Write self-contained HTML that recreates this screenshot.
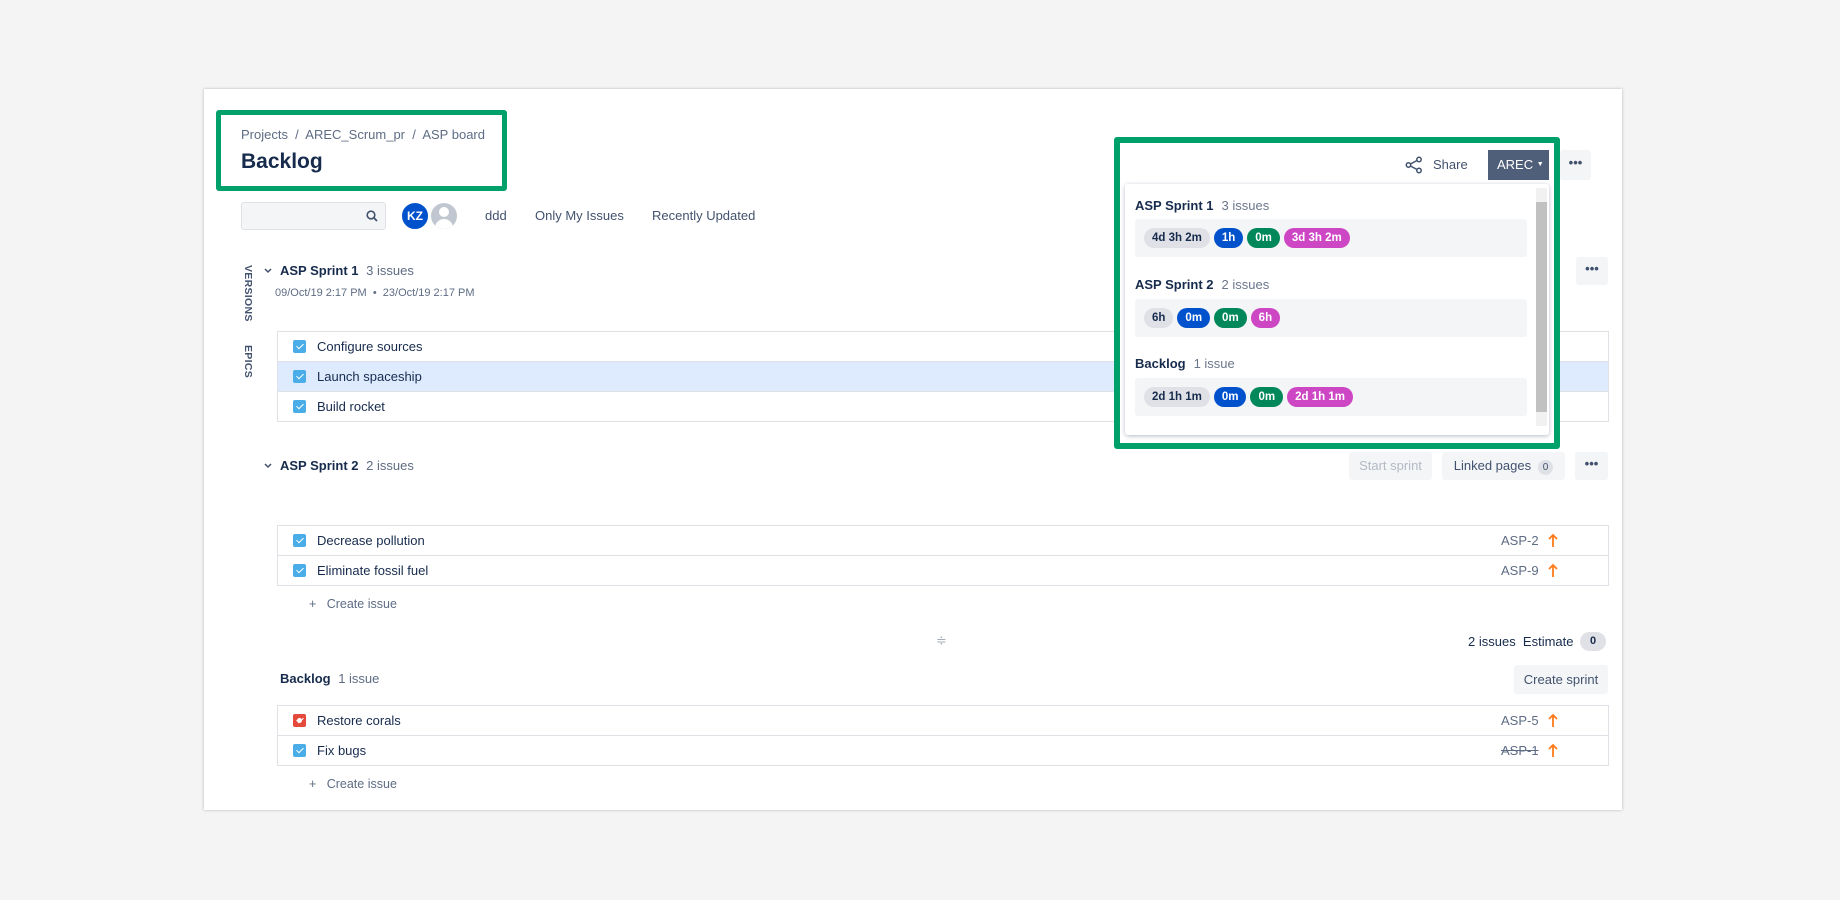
<!DOCTYPE html>
<html><head><meta charset="utf-8"><style>
*{box-sizing:border-box;margin:0;padding:0}
body{width:1840px;height:900px;background:#f4f4f4;font-family:"Liberation Sans",sans-serif;color:#172b4d;position:relative;overflow:hidden;font-size:13px}
.a{position:absolute}
.card{left:204px;top:89px;width:1418px;height:721px;background:#fff;box-shadow:0 0 3px rgba(0,0,0,.25)}
.g{color:#5e6c84}
.row{position:absolute;left:277px;width:1332px;height:31px;border:1px solid #dfe1e6;background:#fff}
.row .t{position:absolute;left:39px;top:7px;font-size:13px}
.cb{position:absolute;left:15px;top:8px;width:13px;height:13px;background:#4bade8;border-radius:2px}
.cb:after{content:"";position:absolute;left:4.5px;top:2px;width:3px;height:6px;border:solid #fff;border-width:0 1.6px 1.6px 0;transform:rotate(45deg)}
.btn{position:absolute;background:#f4f5f7;border-radius:3px;font-size:13px;text-align:center;color:#42526e}
.key{position:absolute;left:1223px;top:7px;color:#5e6c84;font-size:13px}
.arr{position:absolute;left:1269px;top:7px}
.pill{display:inline-block;height:20px;line-height:20px;border-radius:10px;padding:0 8px;font-size:11.5px;font-weight:bold;margin-right:4px;color:#fff}
.box{position:absolute;left:1135px;width:392px;height:38px;background:#f4f5f7;border-radius:3px;padding:9px 0 0 9px}
.lbl{position:absolute;left:1135px;font-size:13px;font-weight:bold}
.lbl span{font-weight:normal;color:#6b778c;margin-left:8px}
</style></head><body>
<div class="a card"></div>

<div class="a" style="left:216px;top:110px;width:291px;height:81px;border:5px solid #00a06a;border-radius:3px"></div>
<div class="a g" style="left:241px;top:127px;font-size:13px">Projects&nbsp; /&nbsp; AREC_Scrum_pr&nbsp; /&nbsp; ASP board</div>
<div class="a" style="left:241px;top:150px;font-size:21px;font-weight:bold">Backlog</div>

<div class="a" style="left:241px;top:202px;width:145px;height:28px;border:1px solid #dfe1e6;background:#f4f5f7;border-radius:3px"></div>
<svg class="a" style="left:366px;top:210px" width="12" height="12" viewBox="0 0 12 12"><circle cx="5" cy="5" r="3.8" fill="none" stroke="#42526e" stroke-width="1.6"/><path d="M8 8l3 3" stroke="#42526e" stroke-width="1.8"/></svg>
<div class="a" style="left:429px;top:201px;width:30px;height:30px;border-radius:50%;background:#c1c7d0;border:2px solid #fff;overflow:hidden"><div class="a" style="left:8px;top:4px;width:10px;height:10px;border-radius:50%;background:#fff"></div><div class="a" style="left:4px;top:16px;width:18px;height:14px;border-radius:9px 9px 0 0;background:#fff"></div></div>
<div class="a" style="left:400px;top:201px;width:30px;height:30px;border-radius:50%;background:#0052cc;color:#fff;font-size:12px;font-weight:bold;text-align:center;line-height:26px;border:2px solid #fff">KZ</div>
<div class="a" style="left:485px;top:208px;color:#42526e">ddd</div>
<div class="a" style="left:535px;top:208px;color:#42526e">Only My Issues</div>
<div class="a" style="left:652px;top:208px;color:#42526e">Recently Updated</div>

<div class="a" style="left:242px;top:265px;font-size:10.5px;font-weight:bold;color:#42526e;writing-mode:vertical-rl;letter-spacing:.3px">VERSIONS</div>
<div class="a" style="left:242px;top:345px;font-size:10.5px;font-weight:bold;color:#42526e;writing-mode:vertical-rl;letter-spacing:.3px">EPICS</div>

<svg class="a" style="left:264px;top:268px" width="8" height="6" viewBox="0 0 8 6"><path d="M1 1l3 3 3-3" fill="none" stroke="#42526e" stroke-width="1.5"/></svg>
<div class="a" style="left:280px;top:263px;font-size:13px;font-weight:bold">ASP Sprint 1 <span class="g" style="font-weight:normal;margin-left:4px">3 issues</span></div>
<div class="a g" style="left:275px;top:287px;font-size:11px">09/Oct/19 2:17 PM &nbsp;•&nbsp; 23/Oct/19 2:17 PM</div>
<div class="btn" style="left:1576px;top:257px;width:32px;height:28px;line-height:24px;font-weight:bold">•••</div>

<div class="row" style="top:331px"><div class="cb"></div><div class="t">Configure sources</div></div>
<div class="row" style="top:361px;background:#deebff"><div class="cb"></div><div class="t">Launch spaceship</div></div>
<div class="row" style="top:391px"><div class="cb"></div><div class="t">Build rocket</div></div>

<svg class="a" style="left:264px;top:463px" width="8" height="6" viewBox="0 0 8 6"><path d="M1 1l3 3 3-3" fill="none" stroke="#42526e" stroke-width="1.5"/></svg>
<div class="a" style="left:280px;top:458px;font-size:13px;font-weight:bold">ASP Sprint 2 <span class="g" style="font-weight:normal;margin-left:4px">2 issues</span></div>
<div class="btn" style="left:1349px;top:452px;width:83px;height:28px;line-height:28px;color:#b3bac5">Start sprint</div>
<div class="btn" style="left:1442px;top:452px;width:123px;height:28px;line-height:28px">Linked pages <span style="display:inline-block;background:#dfe1e6;border-radius:8px;padding:0 5px;font-size:10px;line-height:15px;margin-left:3px">0</span></div>
<div class="btn" style="left:1575px;top:452px;width:33px;height:28px;line-height:24px;font-weight:bold">•••</div>

<svg width="0" height="0" style="position:absolute"><defs><g id="up"><path d="M6 14V2M2 6l4-4 4 4" fill="none" stroke="#ff7a1a" stroke-width="1.8"/></g></defs></svg>
<div class="row" style="top:525px"><div class="cb"></div><div class="t">Decrease pollution</div><div class="key">ASP-2</div><svg class="arr" width="12" height="15"><use href="#up"/></svg></div>
<div class="row" style="top:555px"><div class="cb"></div><div class="t">Eliminate fossil fuel</div><div class="key">ASP-9</div><svg class="arr" width="12" height="15"><use href="#up"/></svg></div>
<div class="a g" style="left:309px;top:597px;font-size:12.5px">+&nbsp;&nbsp; Create issue</div>

<div class="a" style="left:936px;top:633px;color:#a5adba;font-size:13px">≑</div>
<div class="a" style="left:1468px;top:634px;font-size:13px">2 issues&nbsp; Estimate</div>
<div class="a" style="left:1580px;top:632px;width:26px;height:19px;border-radius:10px;background:#dfe1e6;font-size:11px;font-weight:bold;text-align:center;line-height:19px">0</div>

<div class="a" style="left:280px;top:671px;font-size:13px;font-weight:bold">Backlog <span class="g" style="font-weight:normal;margin-left:4px">1 issue</span></div>
<div class="btn" style="left:1514px;top:665px;width:94px;height:29px;line-height:29px">Create sprint</div>

<div class="row" style="top:705px"><div class="cb" style="background:#e5493a"></div><div class="a" style="left:19px;top:12px;width:5px;height:5px;background:#fff;border-radius:50%"></div><div class="t">Restore corals</div><div class="key">ASP-5</div><svg class="arr" width="12" height="15"><use href="#up"/></svg></div>
<div class="row" style="top:735px"><div class="cb"></div><div class="t">Fix bugs</div><div class="key" style="text-decoration:line-through">ASP-1</div><svg class="arr" width="12" height="15"><use href="#up"/></svg></div>
<div class="a g" style="left:309px;top:777px;font-size:12.5px">+&nbsp;&nbsp; Create issue</div>

<!-- popup -->
<div class="a" style="left:1114px;top:137px;width:446px;height:312px;border:6px solid #00a06a;border-radius:3px;background:#fff"></div>
<svg class="a" style="left:1405px;top:156px" width="18" height="18" viewBox="0 0 18 18"><g fill="none" stroke="#42526e" stroke-width="1.5"><circle cx="3.5" cy="9" r="2.2"/><circle cx="14" cy="3.5" r="2.2"/><circle cx="14" cy="14.5" r="2.2"/><path d="M5.5 8l6.5-3.5M5.5 10l6.5 3.5"/></g></svg>
<div class="a" style="left:1433px;top:157px;font-size:13px;color:#42526e">Share</div>
<div class="a" style="left:1488px;top:150px;width:61px;height:30px;background:#505f79;color:#fff;font-size:13px;line-height:30px;padding-left:9px">AREC <span style="font-size:7px;vertical-align:3px">▼</span></div>
<div class="btn" style="left:1560px;top:150px;width:31px;height:30px;line-height:25px;font-weight:bold">•••</div>
<div class="a" style="left:1125px;top:184px;width:424px;height:251px;background:#fff;border-radius:3px;box-shadow:0 1px 4px rgba(9,30,66,.3)"></div>
<div class="a" style="left:1536px;top:188px;width:11px;height:238px;background:#f1f1f1"></div>
<div class="a" style="left:1536px;top:202px;width:11px;height:210px;background:#c1c1c1"></div>

<div class="lbl" style="top:198px">ASP Sprint 1<span>3 issues</span></div>
<div class="box" style="top:219px"><span class="pill" style="background:#dfe1e6;color:#172b4d">4d 3h 2m</span><span class="pill" style="background:#0052cc">1h</span><span class="pill" style="background:#00875a">0m</span><span class="pill" style="background:#cd47c4">3d 3h 2m</span></div>
<div class="lbl" style="top:277px">ASP Sprint 2<span>2 issues</span></div>
<div class="box" style="top:299px"><span class="pill" style="background:#dfe1e6;color:#172b4d">6h</span><span class="pill" style="background:#0052cc">0m</span><span class="pill" style="background:#00875a">0m</span><span class="pill" style="background:#cd47c4">6h</span></div>
<div class="lbl" style="top:356px">Backlog<span>1 issue</span></div>
<div class="box" style="top:378px"><span class="pill" style="background:#dfe1e6;color:#172b4d">2d 1h 1m</span><span class="pill" style="background:#0052cc">0m</span><span class="pill" style="background:#00875a">0m</span><span class="pill" style="background:#cd47c4">2d 1h 1m</span></div>
</body></html>
